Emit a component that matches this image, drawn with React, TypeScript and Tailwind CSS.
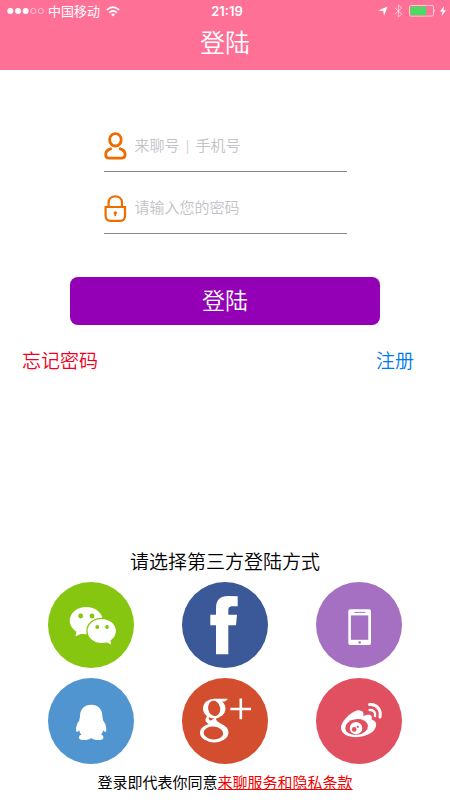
import type { ReactNode } from "react";

interface provider {
  name: string;
  color: string;
  icon: ReactNode;
}

const providers: provider[] = [
  {
    name: "微信",
    color: "bg-[#86c610]",
    icon: (
      <>
        <ellipse cx="38.2" cy="38.6" rx="16.5" ry="13.6" fill="#fff" />
        <path d="M29 47 L27.5 54.2 L36.5 50.5 Z" fill="#fff" />
        <ellipse cx="53.7" cy="49" rx="14.8" ry="12.6" fill="#fff" stroke="#86c610" strokeWidth="1.3" />
        <path d="M57 59.5 L63.2 62.6 L62 56.5 Z" fill="#fff" />
        <g fill="#86c610">
          <circle cx="32.7" cy="34" r="2.4" />
          <circle cx="44" cy="34" r="2.4" />
          <circle cx="49.3" cy="45" r="1.9" />
          <circle cx="59" cy="45" r="1.9" />
        </g>
      </>
    ),
  },
  {
    name: "Facebook",
    color: "bg-[#3b5998]",
    icon: (
      <path
        d="M55.7 14.3 V24.3 H50 Q46.3 24.3 46.3 28 V32.7 H55 L54 43.3 H46.3 V72.3 H34 V43.3 H28.3 V32.7 H34 V26 Q34 14 46 14 Q51 14 55.7 14.3 Z"
        fill="#fff"
      />
    ),
  },
  {
    name: "手机",
    color: "bg-[#a570c2]",
    icon: (
      <>
        <rect x="32.3" y="27.3" width="22.7" height="35.7" rx="2" fill="#fff" />
        <rect x="34.9" y="33.4" width="17.4" height="24.4" fill="#a570c2" />
        <path d="M38.4 30.4 H49.2" stroke="#a570c2" strokeWidth="1" />
        <circle cx="43.7" cy="60.5" r="1.3" fill="#a570c2" />
      </>
    ),
  },
  {
    name: "QQ",
    color: "bg-[#5094d0]",
    icon: (
      <path
        d="M43.2 26.8 C36.3 26.8 32.2 31.3 32 38 C32.2 39.6 31.3 40.4 31.4 42.2 C29.3 44.8 27.8 48.5 28.1 52.2 C28.3 54.6 29.4 54.4 31.2 52.2 C31.6 54 32.3 55.3 33.4 56.6 C31.4 57.4 30.5 58.8 31.2 60.4 C32.4 62.6 40.5 62.6 43.2 60 C45.9 62.6 54 62.6 55.2 60.4 C55.9 58.8 55 57.4 53 56.6 C54.1 55.3 54.8 54 55.2 52.2 C57 54.4 58.1 54.6 58.3 52.2 C58.6 48.5 57.1 44.8 55 42.2 C55.1 40.4 54.2 39.6 54.4 38 C54.2 31.3 50.1 26.8 43.2 26.8 Z"
        fill="#fff"
      />
    ),
  },
  {
    name: "Google+",
    color: "bg-[#d34e2e]",
    icon: (
      <>
        <g fill="#fff">
          <path d="M32 20.7 H46 L43 23.4 H38 Z" />
          <ellipse cx="32.2" cy="30.6" rx="11.2" ry="9.9" />
          <path d="M27 38.5 C25.8 41.5 28 43 33 44.6 L40 47.4 L36 50 L27 46.2 C22.5 43.8 22.6 41 25.4 38 Z" />
          <path d="M35.5 38.5 C32.6 41.5 34.6 43.2 38.6 45.4 C43.4 47.8 46.3 50 46.3 54.2 L34 49 L28 43 Z" />
          <ellipse cx="32.2" cy="54.8" rx="14.2" ry="9.6" />
        </g>
        <g fill="#d34e2e">
          <ellipse cx="32.2" cy="30.4" rx="6" ry="7.7" transform="rotate(-12 32.2 30.4)" />
          <ellipse cx="31.4" cy="55" rx="9.8" ry="6.5" transform="rotate(4 31.4 55)" />
        </g>
        <path d="M48.3 31 H69 M58.8 20.5 V41.3" stroke="#fff" strokeWidth="2.6" />
      </>
    ),
  },
  {
    name: "微博",
    color: "bg-[#e05061]",
    icon: (
      <>
        <path
          d="M43.6 32.4 C38 31.2 25 42.5 25 49.8 C25 55.6 31.8 59.2 40.2 59.2 C51.5 59.2 60.2 53 60.2 46.8 C60.2 43.8 58.2 42.4 55.6 41.6 C56.8 37.2 54.2 35.4 47.2 38 C48.2 34.8 47 32.8 43.6 32.4 Z"
          fill="#fff"
        />
        <ellipse cx="40.6" cy="49" rx="11.4" ry="7.9" fill="#e05061" transform="rotate(-7 40.6 49)" />
        <circle cx="40" cy="50.2" r="6.2" fill="#fff" />
        <circle cx="38.2" cy="51.4" r="2.3" fill="#e05061" />
        <circle cx="41.8" cy="48.8" r="1.1" fill="#e05061" />
        <g fill="none" stroke="#fff" strokeLinecap="round">
          <path d="M53.6 26.6 C60.5 25.8 65.4 31.5 64 39" strokeWidth="3" />
          <path d="M53.6 32 C57.6 31.6 59.8 34.4 59 38" strokeWidth="2.4" />
        </g>
      </>
    ),
  },
];

function StatusBar() {
  return (
    <div className="grid h-[22px] grid-cols-[1fr_auto_1fr] items-center px-1 text-[13px] leading-[22px]">
      <div className="flex items-center gap-1 pl-[3px]">
        <svg width="37" height="8" viewBox="0 0 37 8" aria-hidden="true">
          <g fill="#fff">
            <circle cx="3.3" cy="4" r="3" />
            <circle cx="11" cy="4" r="3" />
            <circle cx="18.6" cy="4" r="3" />
          </g>
          <g fill="none" stroke="#fff" strokeOpacity="0.7" strokeWidth="0.8">
            <circle cx="26.3" cy="4" r="2.6" />
            <circle cx="33.8" cy="4" r="2.6" />
          </g>
        </svg>
        <span>中国移动</span>
        <svg className="ml-0.5" width="14" height="11" viewBox="0 0 14 11" aria-hidden="true">
          <g fill="none" stroke="#fff" strokeWidth="1.7">
            <path d="M0.8 4 Q7 -1.8 13.2 4" />
            <path d="M3.2 6.6 Q7 3 10.8 6.6" />
          </g>
          <path d="M4.9 8.2 Q7 6.6 9.1 8.2 L7 10.5 Z" fill="#fff" />
        </svg>
      </div>
      <span className="pl-1 font-['Inter','Liberation_Sans',sans-serif] font-semibold">21:19</span>
      <div className="flex items-center justify-end gap-1">
        <svg width="10" height="10" viewBox="0 0 10 10" aria-hidden="true">
          <path d="M9.6 0.4 L6 9.8 L5.2 5 L0.2 4.4 Z" fill="#fff" />
        </svg>
        <svg className="ml-0.5" width="9" height="14" viewBox="0 0 9 14" aria-hidden="true">
          <path d="M0.8 3.8 L7.8 10 L4.4 13 V1 L7.8 4 L0.8 10.2" fill="none" stroke="#fff" strokeOpacity="0.6" />
        </svg>
        <svg className="ml-0.5" width="27" height="12" viewBox="0 0 27 12" aria-hidden="true">
          <rect x="0.5" y="0.5" width="24" height="10.6" rx="1.6" fill="none" stroke="#fff" strokeOpacity="0.6" />
          <rect x="1.4" y="1.4" width="15.8" height="8.8" fill="#4cd964" />
          <path d="M25.4 4 Q27 5.8 25.4 7.6 Z" fill="#fff" />
        </svg>
        <svg width="6" height="10" viewBox="0 0 6 10" aria-hidden="true">
          <path d="M4.2 0 L0 5.6 H2.6 L1.6 10 L6 4.2 H3.3 Z" fill="#fff" />
        </svg>
      </div>
    </div>
  );
}

function UserIcon() {
  return (
    <svg width="23" height="30" viewBox="0 0 23 30" fill="none" stroke="#ee6c00" strokeWidth="2.8" aria-hidden="true">
      <ellipse cx="11.4" cy="9.8" rx="5.8" ry="6.2" />
      <path d="M6.6 18.8 C3.2 19.8 1.7 22 1.7 24.4 C1.7 27.2 3.4 28.2 5.8 28.2 H17 C19.4 28.2 21.1 27.2 21.1 24.4 C21.1 22 19.6 19.8 16.2 18.8" strokeLinecap="round" />
    </svg>
  );
}

function LockIcon() {
  return (
    <svg width="23" height="30" viewBox="0 0 23 30" fill="none" stroke="#ee6c00" strokeWidth="2.2" aria-hidden="true">
      <path d="M4.6 14.8 V10.6 C4.6 6.8 7.5 4.3 11.3 4.3 C15.1 4.3 18 6.8 18 10.6 V14.8" />
      <path d="M1.6 15 H21 V23.8 C21 27 19 28.8 16 28.8 H6.6 C3.6 28.8 1.6 27 1.6 23.8 Z" />
      <path d="M11.3 20.6 V24.2" strokeWidth="1.6" />
      <circle cx="11.3" cy="21" r="1.7" fill="#ee6c00" stroke="none" />
    </svg>
  );
}

export default function App() {
  return (
    <div className="flex min-h-screen flex-col bg-white font-['Noto_Sans','Noto_Sans_CJK_SC',sans-serif] text-black">
      <header className="bg-[#ff7096] text-white">
        <StatusBar />
        <h1 className="pt-0.5 pb-2.5 text-center text-[25px] leading-9 font-[350]">登陆</h1>
      </header>

      <main className="flex flex-1 flex-col">
        <form onSubmit={(e) => e.preventDefault()}>
          <div className="mx-auto w-[54%] pt-10">
            <div className="flex items-center gap-2 border-b border-[#888] pt-5 pb-[11px]">
              <label htmlFor="account" aria-label="账号">
                <UserIcon />
              </label>
              <input
                id="account"
                type="text"
                placeholder="来聊号 | 手机号"
                className="min-w-0 flex-1 text-[15px] leading-6 font-[350] outline-none placeholder:text-[#c2c2c8]"
              />
            </div>
            <div className="flex items-center gap-2 border-b border-[#888] pt-5 pb-[11px]">
              <label htmlFor="password" aria-label="密码">
                <LockIcon />
              </label>
              <input
                id="password"
                type="password"
                placeholder="请输入您的密码"
                className="min-w-0 flex-1 text-[15px] leading-6 font-[350] outline-none placeholder:text-[#c2c2c8]"
              />
            </div>
          </div>
          <button
            type="submit"
            className="mx-auto mt-[43px] block h-12 w-[69%] rounded-lg bg-[#9300b6] pb-0.5 text-[23px] font-[350] text-white"
          >
            登陆
          </button>
        </form>

        <div className="mt-[22px] flex justify-between pr-9 pl-[22px] text-[19px] leading-7 font-[350]">
          <a href="#forgot" className="text-[#f00020]">忘记密码</a>
          <a href="#register" className="text-[#007aef]">注册</a>
        </div>

        <section className="mt-auto pt-10">
          <h2 className="text-center text-[19px] leading-7 font-[350]">请选择第三方登陆方式</h2>
          <div className="mt-1.5 grid grid-cols-[auto_auto_auto] justify-between gap-y-2.5 px-12">
            {providers.map((item) => (
              <button
                key={item.name}
                type="button"
                aria-label={item.name}
                className={`size-[86px] rounded-full ${item.color}`}
              >
                <svg width="86" height="86" viewBox="0 0 86 86" aria-hidden="true">
                  {item.icon}
                </svg>
              </button>
            ))}
          </div>
          <p className="mt-1.5 pb-1.5 text-center text-[15px] leading-6">
            登录即代表你同意
            <a href="#terms" className="text-[#f00000] underline">来聊服务和隐私条款</a>
          </p>
        </section>
      </main>
    </div>
  );
}
